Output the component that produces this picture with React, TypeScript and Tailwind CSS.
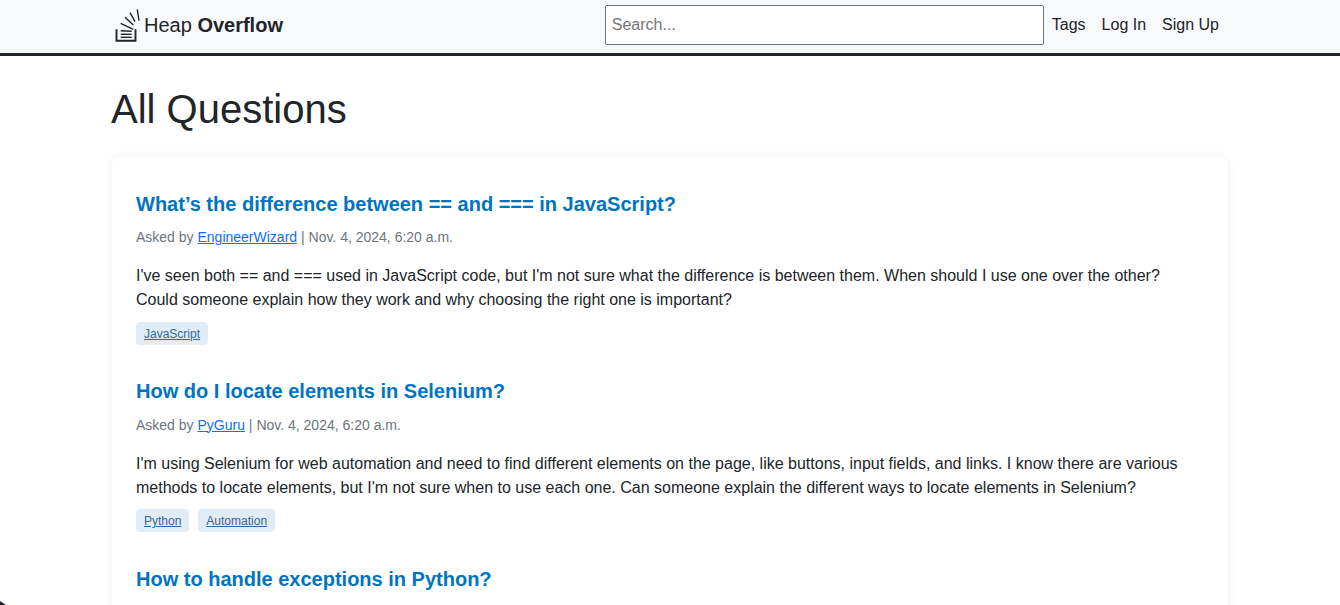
const questions = [
  {
    title: "What’s the difference between == and === in JavaScript?",
    author: "EngineerWizard",
    date: "Nov. 4, 2024, 6:20 a.m.",
    body: "I've seen both == and === used in JavaScript code, but I'm not sure what the difference is between them. When should I use one over the other? Could someone explain how they work and why choosing the right one is important?",
    tags: ["JavaScript"],
  },
  {
    title: "How do I locate elements in Selenium?",
    author: "PyGuru",
    date: "Nov. 4, 2024, 6:20 a.m.",
    body: "I'm using Selenium for web automation and need to find different elements on the page, like buttons, input fields, and links. I know there are various methods to locate elements, but I'm not sure when to use each one. Can someone explain the different ways to locate elements in Selenium?",
    tags: ["Python", "Automation"],
  },
  {
    title: "How to handle exceptions in Python?",
  },
]

function Logo() {
  return (
    <svg viewBox="0 0 26 34" className="w-[26px] h-[34px] shrink-0" fill="none" stroke="#212529" strokeWidth="1.4">
      <path d="M2.5 21.3v11.4h19V21.3" strokeWidth="1.9" />
      <path d="M6.7 29.3h11" />
      <path d="M6.7 26.3h11" />
      <path d="M6.7 22.7l11 .6" />
      <path d="M6.7 15.3l12.6 6" />
      <path d="M11 9.3l8.3 7.7" />
      <path d="M16 4.7l5 9" />
      <path d="M23.3 1.3l1.7 11.4" />
    </svg>
  )
}

export default function App() {
  return (
    <main className="relative h-[605px] overflow-hidden bg-white text-[#212529] font-['Liberation_Sans',Arial,sans-serif] text-base">
      <nav className="h-14 bg-[#f8f9fa] border-b-[3px] border-[#212529]">
        <div className="w-[1140px] mx-auto px-3 h-[50px] flex items-center">
          <a href="#" className="flex items-center ml-[2px] text-xl">
            <Logo />
            <span className="ml-[4px]">Heap <b>Overflow</b></span>
          </a>
          <div className="ml-auto flex items-center mr-[1px]">
            <input
              placeholder="Search..."
              className="w-[439px] h-10 px-[6px] text-base bg-white border border-[#6c757d] rounded-[2px] placeholder:text-[#757575] outline-none"
            />
            <a href="#" className="px-2">Tags</a>
            <a href="#" className="px-2">Log In</a>
            <a href="#" className="px-2">Sign Up</a>
          </div>
        </div>
      </nav>

      <div className="w-[1140px] mx-auto px-3 pt-[24px]">
        <h1 className="text-[40px] leading-[58px] mb-[19px] -ml-px">All Questions</h1>
        <div className="h-[600px] bg-white rounded-lg shadow-[0_0_10px_rgba(0,0,0,0.06)] px-6 pt-6">
          {questions.map(q => (
            <article key={q.title} className="mb-[23.8px]">
              <h2 className="text-xl leading-[46px] font-bold h-[46.2px]">
                <a href="#" className="text-[#0074c1]">{q.title}</a>
              </h2>
              {q.author && (
                <>
                  <p className="text-sm leading-[21px] text-[#6c757d] mb-[16px]">
                    Asked by <a href="#" className="text-[#0d6efd] underline">{q.author}</a> | {q.date}
                  </p>
                  <p className="leading-6 mb-[9.4px]">{q.body}</p>
                  <div className="flex gap-[9px]">
                    {q.tags.map(tag => (
                      <a
                        key={tag}
                        href="#"
                        className="h-[23px] px-2 pt-[2px] flex items-center rounded bg-[#e1ecf4] text-xs text-[#2c6aa5] underline"
                      >
                        {tag}
                      </a>
                    ))}
                  </div>
                </>
              )}
            </article>
          ))}
        </div>
      </div>

      {/* dark corner at the bottom left of the window */}
      <svg viewBox="0 0 6 4" className="absolute left-0 bottom-0 w-[6px] h-1" fill="#212529">
        <path d="M0 0l6 4H0z" />
      </svg>
    </main>
  )
}
